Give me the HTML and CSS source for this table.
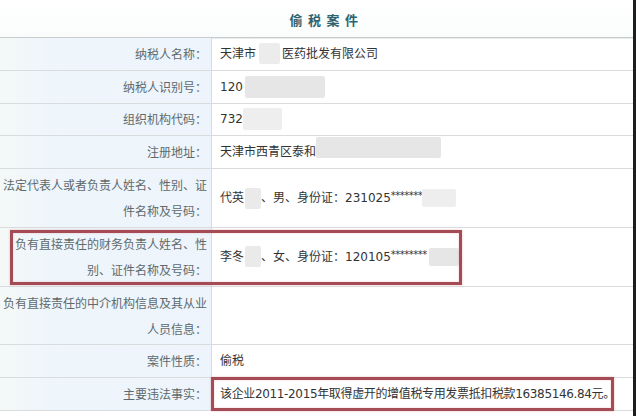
FILE: index.html
```html
<!DOCTYPE html>
<html lang="zh-CN">
<head>
<meta charset="utf-8">
<title>偷税案件</title>
<link rel="stylesheet" href="styles.css">
</head>
<body>
<div class="page">
  <div class="sheet">
    <div class="title">偷税案件</div>
    <div class="row">
      <div class="label">纳税人名称：</div>
      <div class="value">天津市<span class="blur b-name"></span>医药批发有限公司</div>
    </div>
    <div class="row">
      <div class="label">纳税人识别号：</div>
      <div class="value">120<span class="blur b-id"></span></div>
    </div>
    <div class="row">
      <div class="label">组织机构代码：</div>
      <div class="value">732<span class="blur b-org"></span></div>
    </div>
    <div class="row">
      <div class="label">注册地址：</div>
      <div class="value">天津市西青区泰和<span class="blur b-addr"></span></div>
    </div>
    <div class="row">
      <div class="label">法定代表人或者负责人姓名、性别、证件名称及号码：</div>
      <div class="value">代英<span class="blur b-nm"></span>、男、身份证：231025<span class="stars">*******</span><span class="blur b-tail"></span></div>
    </div>
    <div class="row">
      <div class="label">负有直接责任的财务负责人姓名、性别、证件名称及号码：</div>
      <div class="value">李冬<span class="blur b-nm"></span>、女、身份证：120105<span class="stars">********</span><span class="blur b-tail2"></span></div>
    </div>
    <div class="row">
      <div class="label">负有直接责任的中介机构信息及其从业人员信息：</div>
      <div class="value"></div>
    </div>
    <div class="row">
      <div class="label">案件性质：</div>
      <div class="value">偷税</div>
    </div>
    <div class="row">
      <div class="label">主要违法事实：</div>
      <div class="value fact">该企业2011-2015年取得虚开的增值税专用发票抵扣税款16385146.84元。</div>
    </div>
    <div class="mark mark-person"></div>
    <div class="mark mark-fact"></div>
  </div>
  <div class="edge"></div>
</div>
</body>
</html>
```
FILE: styles.css
```css
html, body {
  margin: 0;
  padding: 0;
  background: #ffffff;
}
.page {
  display: flex;
  width: 636px;
  height: 416px;
  overflow: hidden;
}
.sheet {
  position: relative;
  flex: 1;
  background: #ffffff;
}
.edge {
  width: 3px;
  background: #1e1e1e;
}
.title {
  height: 37px;
  line-height: 40px;
  text-align: center;
  padding-left: 20px;
  font-family: "Noto Sans CJK SC", sans-serif;
  font-weight: bold;
  font-size: 13px;
  letter-spacing: 5.5px;
  color: #2d6470;
  border-bottom: 1px solid #c9cccd;
  box-shadow: 0 1px 0 #e9ecee;
  background: linear-gradient(to bottom, #ffffff, #fafcfc);
}
.row {
  display: grid;
  grid-template-columns: 212px 1fr;
  border-bottom: 1px solid #d9dcde;
}
.label {
  box-sizing: border-box;
  padding: 2.9px 4px 2.9px 3px;
  border-right: 1px solid #d9dcde;
  background: linear-gradient(to right, #f4f9f7, #eef5fb 25%, #edf4fb);
  text-align: right;
  line-height: 26px;
  font-family: "Noto Sans CJK SC", sans-serif;
  font-size: 12px;
  color: #5e6a6d;
}
.value {
  display: flex;
  align-items: center;
  padding: 2.9px 8px;
  line-height: 26px;
  font-family: "DejaVu Sans", "Noto Sans CJK SC", sans-serif;
  font-size: 12px;
  color: #333333;
  white-space: nowrap;
}
.fact {
  letter-spacing: -0.35px;
}
.stars {
  font-size: 10px;
  letter-spacing: -0.5px;
  position: relative;
  top: -2px;
}
.blur {
  display: inline-block;
  height: 21px;
  background: #e6e6e6;
  border-radius: 2px;
  filter: blur(0.7px);
}
.b-name { width: 21px; margin: 0 2px 0 3px; background: #ececec; }
.b-id { width: 80px; margin-left: 2px; height: 22px; }
.b-org { width: 39px; height: 22px; background: #eeeeee; }
.b-addr { width: 125px; height: 21px; margin-top: -10px; }
.b-nm { width: 16px; margin: 0 0 0 1px; background: #eaeaea; }
.b-tail { width: 34px; height: 18px; background: #eeeeee; }
.b-tail2 { width: 30px; height: 18px; margin-left: 2px; }
.mark {
  position: absolute;
  box-sizing: border-box;
  border: 3px solid #a54b56;
  box-shadow: 0 0 2px rgba(230, 140, 150, 0.6), inset 0 0 2px rgba(230, 140, 150, 0.5);
}
.mark-person {
  left: 10px;
  top: 230px;
  width: 452px;
  height: 55px;
}
.mark-fact {
  left: 211px;
  top: 377px;
  width: 403px;
  height: 34px;
}
```
